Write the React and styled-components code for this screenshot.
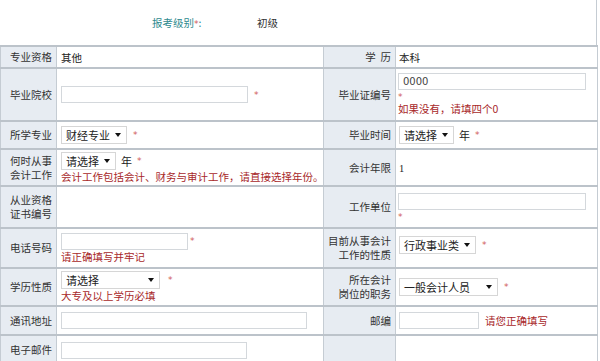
import React from 'react';
import styled, { createGlobalStyle } from 'styled-components';

const GlobalStyle = createGlobalStyle`
  body {
    margin: 0;
    background: #fff;
    font-family: "Noto Sans CJK SC", "Noto Sans", sans-serif;
    font-size: 10.5px;
    color: #333;
  }
`;

const Page = styled.div`
  width: 600px;
  height: 361px;
  overflow: hidden;
`;

const Header = styled.div`
  display: flex;
  align-items: center;
  height: 45px;
  width: 597px;
  box-sizing: border-box;
  padding-left: 152px;
  border-right: 1px solid #c5ccd3;
`;

const Caption = styled.span`
  color: #2e8a8e;
  width: 105px;
`;

const Table = styled.table`
  width: 597px;
  border-collapse: collapse;
  table-layout: fixed;
`;

const Row = styled.tr`
  height: ${({ h }) => h}px;
`;

const Label = styled.th`
  background: #e7ecf2;
  font-weight: normal;
  text-align: right;
  padding: 0 4px 0 0;
  line-height: 14px;
  border-top: 2px solid #bcc3ca;
  border-left: 1px solid #c5ccd3;
  border-right: 1px solid #c5ccd3;
  color: #333;
`;

const Value = styled.td`
  background: #fff;
  padding: 0 0 ${({ pb }) => pb || 0}px ${({ pl }) => pl || 4}px;
  vertical-align: middle;
  border-top: 2px solid #bcc3ca;
  border-right: 1px solid #c5ccd3;
`;

const Line = styled.div`
  display: flex;
  align-items: center;
  gap: ${({ gap }) => (gap === undefined ? 6 : gap)}px;
  line-height: 14px;
`;

const StarLine = styled.div`
  height: 12px;
  line-height: 12px;
`;

const Input = styled.div`
  width: ${({ w }) => w}px;
  height: 17px;
  box-sizing: border-box;
  border: 1px solid #d4d8dc;
  background: #fff;
  padding: 0 4px;
  line-height: 15px;
  font-family: "DejaVu Sans", sans-serif;
  font-size: 10px;
  color: #444;
`;

const Select = styled.div`
  width: ${({ w }) => w}px;
  height: 18px;
  box-sizing: border-box;
  border: 1px solid #d6d6d6;
  background: #fff;
  display: flex;
  align-items: center;
  justify-content: space-between;
  padding: 0 5px 0 4px;
  font-size: 11px;
  color: #222;
`;

const Caret = styled.span`
  width: 0;
  height: 0;
  border-left: 3px solid transparent;
  border-right: 3px solid transparent;
  border-top: 4px solid #111;
`;

const Star = styled.span`
  color: #d05a5a;
  font-family: "DejaVu Sans", sans-serif;
  font-size: 9px;
  line-height: 10px;
`;

const Hint = styled.div`
  color: #a8282a;
  line-height: 14px;
  white-space: nowrap;
`;

const Year = styled.span`
  color: #222;
  font-size: 11px;
`;

const Plain = styled.span`
  font-family: ${({ serif }) => (serif ? '"Liberation Serif", serif' : 'inherit')};
  color: #222;
`;

const SelectField = ({ w, text }) => (
  <Select w={w}>
    <span>{text}</span>
    <Caret />
  </Select>
);

const App = () => (
  <Page>
    <GlobalStyle />
    <Header>
      <Caption>
        报考级别<Star>*</Star>:
      </Caption>
      <span>初级</span>
    </Header>
    <Table>
      <colgroup>
        <col style={{ width: 56 }} />
        <col style={{ width: 267 }} />
        <col style={{ width: 72 }} />
        <col style={{ width: 202 }} />
      </colgroup>
      <tbody>
        <Row h={22}>
          <Label>专业资格</Label>
          <Value><Plain>其他</Plain></Value>
          <Label>学&nbsp;&nbsp;历</Label>
          <Value pl={3}><Plain>本科</Plain></Value>
        </Row>
        <Row h={53}>
          <Label>毕业院校</Label>
          <Value>
            <Line>
              <Input w={187} />
              <Star>*</Star>
            </Line>
          </Value>
          <Label>毕业证编号</Label>
          <Value pl={2}>
            <Input w={188}>0000</Input>
            <StarLine><Star>*</Star></StarLine>
            <Hint>如果没有，请填四个0</Hint>
          </Value>
        </Row>
        <Row h={28}>
          <Label>所学专业</Label>
          <Value>
            <Line>
              <SelectField w={66} text="财经专业" />
              <Star>*</Star>
            </Line>
          </Value>
          <Label>毕业时间</Label>
          <Value pl={3}>
            <Line gap={5}>
              <SelectField w={55} text="请选择" />
              <Year>年</Year>
              <Star>*</Star>
            </Line>
          </Value>
        </Row>
        <Row h={37}>
          <Label>何时从事<br />会计工作</Label>
          <Value>
            <Line gap={5}>
              <SelectField w={55} text="请选择" />
              <Year>年</Year>
              <Star>*</Star>
            </Line>
            <Hint>会计工作包括会计、财务与审计工作，请直接选择年份。</Hint>
          </Value>
          <Label>会计年限</Label>
          <Value pl={3}><Plain serif>1</Plain></Value>
        </Row>
        <Row h={42}>
          <Label>从业资格<br />证书编号</Label>
          <Value />
          <Label>工作单位</Label>
          <Value pl={2}>
            <Input w={188} />
            <StarLine><Star>*</Star></StarLine>
          </Value>
        </Row>
        <Row h={40}>
          <Label>电话号码</Label>
          <Value>
            <Line gap={2}>
              <Input w={127} />
              <Star>*</Star>
            </Line>
            <Hint>请正确填写并牢记</Hint>
          </Value>
          <Label>目前从事会计<br />工作的性质</Label>
          <Value pl={3} pb={6}>
            <Line>
              <SelectField w={77} text="行政事业类" />
              <Star>*</Star>
            </Line>
          </Value>
        </Row>
        <Row h={38}>
          <Label>学历性质</Label>
          <Value>
            <Line gap={8}>
              <SelectField w={99} text="请选择" />
              <Star>*</Star>
            </Line>
            <Hint>大专及以上学历必填</Hint>
          </Value>
          <Label>所在会计<br />岗位的职务</Label>
          <Value pl={3}>
            <Line>
              <SelectField w={99} text="一般会计人员" />
              <Star>*</Star>
            </Line>
          </Value>
        </Row>
        <Row h={29}>
          <Label>通讯地址</Label>
          <Value>
            <Input w={246} />
          </Value>
          <Label>邮编</Label>
          <Value pl={3}>
            <Line>
              <Input w={80} />
              <Hint>请您正确填写</Hint>
            </Line>
          </Value>
        </Row>
        <Row h={29}>
          <Label>电子邮件</Label>
          <Value>
            <Input w={186} />
          </Value>
          <Label />
          <Value />
        </Row>
      </tbody>
    </Table>
  </Page>
);

export default App;
